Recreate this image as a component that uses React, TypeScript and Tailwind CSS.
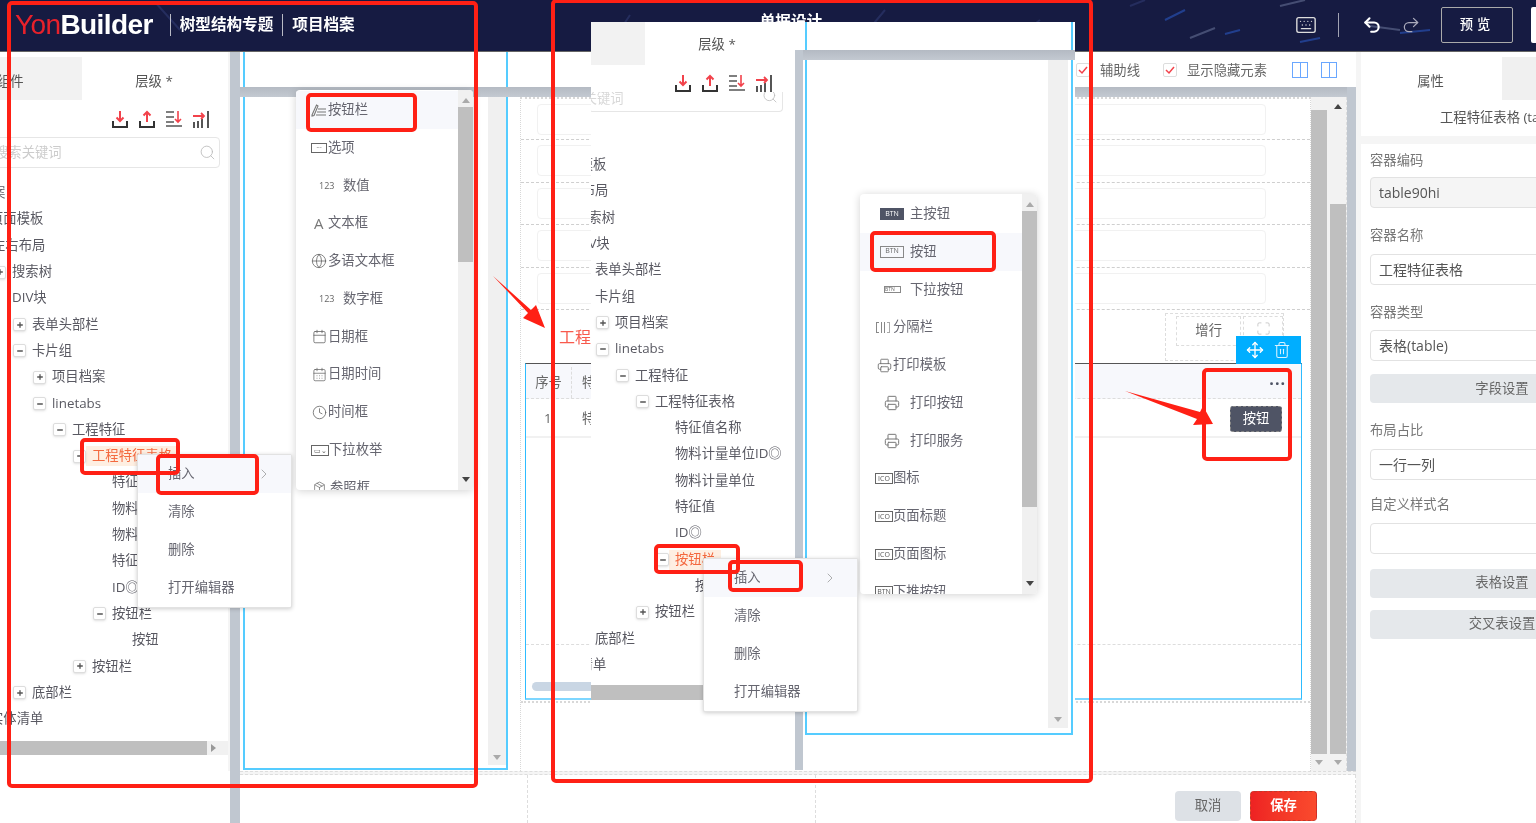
import { Calendar, CalendarDays, ChevronRight, Clock, Globe, Keyboard, Maximize, Minus, Move, Package, Plus, Printer, Redo2, Search, Trash2, Undo2 } from 'lucide-react';
import type { ReactNode } from 'react';

type Row = { text: string; level: number; exp?: 'plus' | 'minus'; active?: boolean };

const leftRows: Row[] = [
  { text: '项目档案', level: -2 },
  { text: '页面模板', level: -0.1 },
  { text: '左右布局', level: 0 },
  { text: '搜索树', level: 1, exp: 'plus' },
  { text: 'DIV块', level: 1 },
  { text: '表单头部栏', level: 2, exp: 'plus' },
  { text: '卡片组', level: 2, exp: 'minus' },
  { text: '项目档案', level: 3, exp: 'plus' },
  { text: 'linetabs', level: 3, exp: 'minus' },
  { text: '工程特征', level: 4, exp: 'minus' },
  { text: '工程特征表格', level: 5, exp: 'minus', active: true },
  { text: '特征值名称', level: 6 },
  { text: '物料计量单位ID◎', level: 6 },
  { text: '物料计量单位', level: 6 },
  { text: '特征值', level: 6 },
  { text: 'ID◎', level: 6 },
  { text: '按钮栏', level: 6, exp: 'minus' },
  { text: '按钮', level: 7 },
  { text: '按钮栏', level: 5, exp: 'plus' },
  { text: '底部栏', level: 2, exp: 'plus' },
  { text: '实体清单', level: -0.1 },
];

const rightRows: Row[] = [
  { text: '页面模板', level: -0.1 },
  { text: '左右布局', level: 0 },
  { text: '搜索树', level: 1 },
  { text: 'DIV块', level: 1 },
  { text: '表单头部栏', level: 2 },
  { text: '卡片组', level: 2 },
  { text: '项目档案', level: 3, exp: 'plus' },
  { text: 'linetabs', level: 3, exp: 'minus' },
  { text: '工程特征', level: 4, exp: 'minus' },
  { text: '工程特征表格', level: 5, exp: 'minus' },
  { text: '特征值名称', level: 6 },
  { text: '物料计量单位ID◎', level: 6 },
  { text: '物料计量单位', level: 6 },
  { text: '特征值', level: 6 },
  { text: 'ID◎', level: 6 },
  { text: '按钮栏', level: 6, exp: 'minus', active: true },
  { text: '按钮', level: 7 },
  { text: '按钮栏', level: 5, exp: 'plus' },
  { text: '底部栏', level: 2 },
  { text: '实体清单', level: -0.1 },
];

function Tree({ rows, start }: { rows: Row[]; start: number }) {
  return (
    <div className="whitespace-nowrap text-[13.33px] text-[#595962]">
      {rows.map((r, i) => (
        <div key={i} className="relative flex h-[26.3px] items-center" style={{ marginLeft: start + r.level * 20 }}>
          {r.exp && (
            <span className="absolute flex h-[13px] w-[13px] -translate-x-[19px] items-center justify-center rounded-[2px] border border-[#ddd] bg-white shadow-sm">
              {r.exp === 'plus' ? <Plus size={8} strokeWidth={4} color="#555" /> : <Minus size={8} strokeWidth={4} color="#555" />}
            </span>
          )}
          {r.active ? (
            <span className="-ml-[6px] bg-[#feefe2] px-[6px] text-[#f4693f]">{r.text}</span>
          ) : (
            <span>{r.text}</span>
          )}
        </div>
      ))}
    </div>
  );
}

function ToolIcons() {
  return (
    <div className="flex justify-end gap-[9px]">
      <svg width="18" height="18" viewBox="0 0 18 18" fill="none" strokeWidth="2">
        <path d="M2 11v6h14v-6" stroke="#333" />
        <path d="M9 1v10M5.5 7.5 9 11l3.5-3.5" stroke="#f2424b" />
      </svg>
      <svg width="18" height="18" viewBox="0 0 18 18" fill="none" strokeWidth="2">
        <path d="M2 11v6h14v-6" stroke="#333" />
        <path d="M9 12V2M5.5 5.5 9 2l3.5 3.5" stroke="#f2424b" />
      </svg>
      <svg width="18" height="18" viewBox="0 0 18 18" fill="none" strokeWidth="1.6">
        <path d="M1 2h8M1 7h8M1 12h8M1 16h16" stroke="#555" />
        <path d="M13 1v11M10 9l3 3 3-3" stroke="#f2424b" />
      </svg>
      <svg width="18" height="18" viewBox="0 0 18 18" fill="none" strokeWidth="1.8">
        <path d="M2 12v6M6 11v7M10 9v9M16 1v17" stroke="#444" />
        <path d="M1 6h11M9 3l3 3-3 3" stroke="#f2424b" />
      </svg>
    </div>
  );
}

function Badge({ label, dark }: { label: string; dark?: boolean }) {
  return (
    <span
      className={
        dark
          ? 'flex h-[12px] w-[24px] items-center justify-center bg-[#4f5465] text-[7px] text-white'
          : 'flex h-[12px] w-[24px] items-center justify-center border border-[#888] text-[7px] text-[#666]'
      }
    >
      {label}
    </span>
  );
}

function SmallBox({ label }: { label: string }) {
  return <span className="flex h-[11px] w-[18px] items-center justify-center border border-[#666] text-[7px] leading-none text-[#555]">{label}</span>;
}

type Item = { text: string; icon: ReactNode; hover?: boolean };

const menuOne: Item[] = [
  {
    text: '按钮栏',
    hover: true,
    icon: (
      <span className="flex w-[17px]">
        <svg width="16" height="14" viewBox="0 0 16 14" fill="none" stroke="#777" strokeWidth="1.1">
          <path d="M1 12 5.5 2l1.5 1L3 12.5 1 13zM7 6h8M6 9h9M5 12h10" />
        </svg>
      </span>
    ),
  },
  { text: '选项', icon: <span className="flex w-[17px]"><span className="flex h-[10px] w-[16px] items-center justify-center border border-[#666] text-[7px] leading-none text-[#555]">···</span></span> },
  { text: '数值', icon: <span className="flex w-[32px] pl-[8px] text-[9px] text-[#666]">123</span> },
  { text: '文本框', icon: <span className="flex w-[17px] pl-[3px] text-[15px] leading-none text-[#777]">A</span> },
  { text: '多语文本框', icon: <span className="flex w-[17px]"><Globe size={16} strokeWidth={1.2} color="#666" /></span> },
  { text: '数字框', icon: <span className="flex w-[32px] pl-[8px] text-[9px] text-[#666]">123</span> },
  { text: '日期框', icon: <span className="flex w-[17px] pl-[1px]"><Calendar size={15} strokeWidth={1.3} color="#666" /></span> },
  { text: '日期时间', icon: <span className="flex w-[17px] pl-[1px]"><CalendarDays size={15} strokeWidth={1.2} color="#666" /></span> },
  { text: '时间框', icon: <span className="flex w-[17px] pl-[1px]"><Clock size={15} strokeWidth={1.3} color="#666" /></span> },
  { text: '下拉枚举', icon: <span className="flex w-[18px]"><SmallBox label="▭⌄" /></span> },
  { text: '参照框', icon: <span className="flex w-[19px] pl-[2px]"><Package size={13} strokeWidth={1.3} color="#666" /></span> },
];

const menuTwo: Item[] = [
  { text: '主按钮', icon: <span className="flex w-[35px] pl-[5px]"><Badge label="BTN" dark /></span> },
  { text: '按钮', hover: true, icon: <span className="flex w-[35px] pl-[5px]"><Badge label="BTN" /></span> },
  { text: '下拉按钮', icon: <span className="flex w-[35px] pl-[9px]"><span className="h-[7px] w-[17px] border border-[#888] text-[5px] leading-none text-[#666]">BTN</span></span> },
  { text: '分隔栏', icon: <span className="flex w-[18px] gap-[2px] pl-[1px]"><span className="h-[11px] w-[3px] border-y border-l border-[#888]" /><span className="h-[11px] w-[1px] bg-[#888]" /><span className="h-[11px] w-[1px] bg-[#888]" /><span className="h-[11px] w-[3px] border-y border-r border-[#aaa]" /></span> },
  { text: '打印模板', icon: <span className="flex w-[18px] pl-[2px]"><Printer size={15} strokeWidth={1.3} color="#666" /></span> },
  { text: '打印按钮', icon: <span className="flex w-[35px] pl-[9px]"><Printer size={16} strokeWidth={1.5} color="#777" /></span> },
  { text: '打印服务', icon: <span className="flex w-[35px] pl-[9px]"><Printer size={16} strokeWidth={1.5} color="#777" /></span> },
  { text: '图标', icon: <span className="flex w-[18px]"><SmallBox label="ICO" /></span> },
  { text: '页面标题', icon: <span className="flex w-[18px]"><SmallBox label="ICO" /></span> },
  { text: '页面图标', icon: <span className="flex w-[18px]"><SmallBox label="ICO" /></span> },
  { text: '下推按钮', icon: <span className="flex w-[18px]"><SmallBox label="BTN" /></span> },
];

function ArrowUp() {
  return <span className="h-0 w-0 border-x-[4px] border-b-[5px] border-x-transparent border-b-[#444]" />;
}
function ArrowDown({ dark }: { dark?: boolean }) {
  return dark ? (
    <span className="h-0 w-0 border-x-[4px] border-t-[5px] border-x-transparent border-t-[#444]" />
  ) : (
    <span className="h-0 w-0 border-x-[4px] border-t-[5px] border-x-transparent border-t-[#aaa]" />
  );
}

function MenuPanel({ items, className, thumb }: { items: Item[]; className: string; thumb: string }) {
  return (
    <div className={'absolute flex h-[400px] w-[177px] overflow-hidden rounded-[4px] bg-white shadow-[0_1px_8px_rgba(0,0,0,0.18)] ' + className}>
      <div className="h-full flex-1 overflow-hidden pt-[1px]">
        {items.map((it) => (
          <div key={it.text} className={it.hover ? 'flex h-[37.8px] items-center bg-[#f7f8fc] pl-[15px] text-[13.33px] text-[#666670]' : 'flex h-[37.8px] items-center pl-[15px] text-[13.33px] text-[#666670]'}>
            {it.icon}
            <span>{it.text}</span>
          </div>
        ))}
      </div>
      <div className="flex w-[15px] flex-col items-center bg-[#f0f0f0] py-[8px]">
        <span className="h-0 w-0 border-x-[4px] border-b-[5px] border-x-transparent border-b-[#aaa]" />
        <div className={'mt-[4px] w-full bg-[#bfbfbf] ' + thumb} />
        <div className="flex-1" />
        <ArrowDown dark />
      </div>
    </div>
  );
}

function ContextMenu({ className }: { className: string }) {
  return (
    <div className={'absolute w-[155px] rounded-[2px] border border-[#e2e2e2] bg-white text-[13.33px] text-[#666670] shadow-[0_1px_4px_rgba(0,0,0,0.2)] ' + className}>
      <div className="flex h-[38px] items-center justify-between bg-[#f7f8fc] pr-[19px] pl-[30px]">
        <span>插入</span>
        <ChevronRight size={16} strokeWidth={1} color="#888" />
      </div>
      <div className="flex h-[38px] items-center pl-[30px]">清除</div>
      <div className="flex h-[38px] items-center pl-[30px]">删除</div>
      <div className="flex h-[38px] items-center pl-[30px]">打开编辑器</div>
    </div>
  );
}

function LeftPanel() {
  return (
    <aside className="flex h-full w-[228px] flex-col overflow-hidden bg-white pt-[5px]">
      <div className="flex h-[43px] text-[13.33px] text-[#555]">
        <div className="flex w-[82px] items-center bg-[#f2f2f2] pt-[6px]"><span className="-ml-[3px]">组件</span></div>
        <div className="flex flex-1 items-center justify-center pt-[6px] pr-[2px]">层级 *</div>
      </div>
      <div className="mt-[10px] pr-[18px]"><ToolIcons /></div>
      <div className="mt-[9px] mr-[8px] -ml-[14px] flex h-[31px] items-center justify-between rounded-[4px] border border-[#e6e6e6] pr-[3px] pl-[8px] text-[13.33px] text-[#ccc]">
        <span>搜索关键词</span>
        <Search size={17} strokeWidth={1.2} color="#bbb" />
      </div>
      <div className="mt-[12px] flex-1 overflow-hidden"><Tree rows={leftRows} start={-8} /></div>
      <div className="mb-[16px] flex h-[14px] items-center bg-[#f1f1f1]">
        <div className="h-full w-[207px] bg-[#bfbfbf]" />
        <span className="ml-[4px] h-0 w-0 border-y-[4px] border-l-[5px] border-y-transparent border-l-[#999]" />
      </div>
    </aside>
  );
}

function Checkbox() {
  return (
    <span className="flex h-[14px] w-[14px] items-center justify-center rounded-[2px] border border-[#ddd] bg-white">
      <svg width="10" height="10" viewBox="0 0 10 10" fill="none"><path d="M1 5l3 3 5-6" stroke="#f2424b" strokeWidth="1.5" /></svg>
    </span>
  );
}

function FormRow({ h }: { h: string }) {
  return (
    <div className={'flex items-center border-b border-dashed border-[#cfcfcf] pr-[44px] pl-[16px] ' + h}>
      <div className="h-[31px] flex-1 rounded-[4px] border border-[#f1f1f1]" />
    </div>
  );
}

function Canvas() {
  return (
    <div className="flex min-h-0 flex-1 flex-col">
      <div className="flex h-[35px] items-center gap-[10px] pr-[10px] text-[13.33px] text-[#666]">
        <div className="mr-auto ml-[3px] h-full w-[265px] border-x-2 border-[#55ccff]" />
        <span className="mt-[2px] flex items-center gap-[10px]">
          <Checkbox />
          <span className="mr-[13px]">辅助线</span>
          <Checkbox />
          <span className="mr-[15px]">显示隐藏元素</span>
        </span>
        <span className="flex h-[16px] w-[16px] justify-center border border-[#6aa7ff]"><span className="w-px bg-[#6aa7ff]" /></span>
        <span className="ml-[3px] flex h-[16px] w-[16px] justify-center border border-[#6aa7ff]"><span className="w-px bg-[#6aa7ff]" /></span>
      </div>
      <div className="h-[10px] bg-gradient-to-b from-[#b4bac3] to-[#c3c9d1]" />
      <div className="flex h-[674px]">
        <div className="w-[280px] shrink-0 pl-[3px]">
          <div className="flex h-[673px] w-[265px] justify-end border-x-2 border-b-2 border-[#55ccff] pb-[3px]">
            <div className="flex w-[18px] flex-col items-center justify-end bg-[#f0f0f0] pb-[5px]"><ArrowDown /></div>
          </div>
        </div>
        <div className="flex min-w-0 flex-1 flex-col border-x border-t-2 border-dotted border-[#d8d8d8]">
          <FormRow h="h-[41px]" />
          <FormRow h="h-[42.5px]" />
          <FormRow h="h-[42.5px]" />
          <FormRow h="h-[42.5px]" />
          <FormRow h="h-[42.5px]" />
          <div className="flex h-[53px] items-center justify-between pr-[26px] pl-[38px]">
            <span className="text-[16px] text-[#f85a4d]">工程特征</span>
            <div className="flex h-[48px] w-[119px] gap-[2px] border border-dashed border-[#ddd] pt-[2px] pl-[10px]">
              <div className="flex h-[30px] w-[66px] items-center justify-center border border-dashed border-[#ddd] text-[13.33px] text-[#666]">增行</div>
              <div className="flex h-[30px] w-[40px] items-start justify-center border border-dashed border-[#ddd] pt-[4px]"><Maximize size={15} strokeWidth={1.2} color="#bbb" /></div>
            </div>
          </div>
          <div className="relative ml-[4px] h-[337px] w-[777px] border border-b-2 border-[#2dbcff] border-t-[#555] border-b-[#7dd6ff]">
            <div className="absolute -top-[28px] right-0 flex h-[28px] w-[65px] items-center justify-center gap-[9px] bg-[#00aeff]">
              <Move size={18} strokeWidth={1.8} color="#fff" />
              <Trash2 size={18} strokeWidth={1.4} color="#d9f2ff" />
            </div>
            <div className="flex h-[35px] items-center justify-between border-b border-dashed border-[#ddd] bg-[#f7f8fc] pt-[3px] text-[13.33px] text-[#666]">
              <span className="flex h-full w-[46px] items-center justify-center border-r border-dashed border-[#ddd]">序号</span>
              <span className="mr-auto ml-[10px]">特征值名称</span>
              <span className="pr-[15px] text-[16px] leading-none font-bold tracking-[1px] text-[#4f5465]">···</span>
            </div>
            <div className="flex h-[39px] items-center justify-between border-b-2 border-[#f1f1f1] pt-[3px] text-[13.33px] text-[#666]">
              <span className="w-[46px] pl-[18px]">1</span>
              <span className="mr-auto ml-[10px]">特征值</span>
              <span className="mr-[19px] flex h-[26px] w-[52px] items-center justify-center rounded-[3px] border border-dashed border-[#888] bg-[#4f5465] text-white">按钮</span>
            </div>
            <div className="mt-[206px] border-t border-dashed border-[#ddd]" />
            <div className="mt-[37px] ml-[6px] h-[9px] w-[110px] rounded-full bg-[#c9d6e4]" />
          </div>
          <div className="mt-[1px] h-[3px] border-t-2 border-dotted border-[#d8d8d8]" />
        </div>
        <div className="flex h-full w-[36px] shrink-0 justify-between border-r border-dashed border-[#ddd] bg-[#f2f2f2]">
          <div className="flex w-[16px] flex-col items-center pt-[13px]">
            <div className="w-full flex-1 bg-[#bfbfbf]" />
            <div className="flex h-[17px] items-center"><ArrowDown /></div>
          </div>
          <div className="flex w-[16px] flex-col items-center pt-[7px]">
            <ArrowUp />
            <div className="mt-[95px] w-full flex-1 bg-[#bfbfbf]" />
            <div className="flex h-[17px] items-center"><ArrowDown /></div>
          </div>
        </div>
      </div>
    </div>
  );
}

function Field({ label, first, children }: { label: string; first?: boolean; children: ReactNode }) {
  return (
    <div>
      <div className={(first ? 'h-[33px] ' : 'h-[35px] ') + 'flex items-center text-[13.33px] text-[#777]'}>{label}</div>
      {children}
    </div>
  );
}

function Input({ text, muted }: { text?: string; muted?: boolean }) {
  return (
    <div className={(muted ? 'bg-[#f5f5f5] ' : 'bg-white ') + 'flex h-[31px] w-[300px] items-center rounded-[4px] border border-[#e2e2e2] pl-[8px] text-[14px] text-[#555]'}>{text}</div>
  );
}

function GrayButton({ text }: { text: string }) {
  return <div className="flex h-[29px] w-[264px] items-center justify-center rounded-[4px] bg-[#e5e8eb] text-[13.33px] text-[#666]">{text}</div>;
}

function RightPanel() {
  return (
    <aside className="flex h-[771px] w-[180px] shrink-0 flex-col overflow-hidden border-l-[5px] border-[#f5f5f5] bg-white pt-[5px]">
      <div className="flex h-[43px] shrink-0 text-[13.33px] text-[#555]">
        <div className="flex w-[141px] items-center justify-center pt-[6px] pr-[2px]">属性</div>
        <div className="flex-1 bg-[#f0f0f0]" />
      </div>
      <div className="flex h-[36px] shrink-0 items-center pl-[79px] text-[13.33px] whitespace-nowrap text-[#555]">工程特征表格 (table)</div>
      <div className="h-[8px] shrink-0 bg-[#f5f5f5]" />
      <div className="w-[300px] px-[9px]">
        <Field label="容器编码" first><Input text="table90hi" muted /></Field>
        <div className="mt-[10.5px]" />
        <Field label="容器名称"><Input text="工程特征表格" /></Field>
        <div className="mt-[10.5px]" />
        <Field label="容器类型"><Input text="表格(table)" /></Field>
        <div className="mt-[13px]"><GrayButton text="字段设置" /></div>
        <div className="mt-[10.5px]" />
        <Field label="布局占比"><Input text="一行一列" /></Field>
        <div className="mt-[8px]" />
        <Field label="自定义样式名"><Input /></Field>
        <div className="mt-[15px]"><GrayButton text="表格设置" /></div>
        <div className="mt-[12px]"><GrayButton text="交叉表设置" /></div>
      </div>
    </aside>
  );
}

function HeaderBar() {
  return (
    <header className="relative flex h-[52px] shrink-0 items-center overflow-hidden border-b border-[#666] bg-[#161b42] pr-[23px] pb-[2px] pl-[15px] text-white">
      <svg className="absolute inset-0" width="1536" height="52" fill="none">
        <path d="M155 2 180 30M1000 50 1040 20M860 40 885 10M610 45 630 15M1130 6 1145 0" stroke="#33407a" strokeWidth="2" opacity="0.5" />
        <path d="M1190 38 1215 28M1280 6 1305 0M1370 26 1400 30" stroke="#7f8bb0" strokeWidth="2" opacity="0.45" />
        <path d="M1165 20 1185 10M1225 34 1240 30M1300 42 1320 38M1400 33 1430 30" stroke="#2a56c0" strokeWidth="2" opacity="0.6" />
      </svg>
      <div className="relative flex items-center font-['Liberation_Sans',sans-serif] text-[28px] leading-none tracking-[-0.6px]">
        <span className="text-[#e8212b]">Yon</span>
        <span className="font-bold text-white">Builder</span>
      </div>
      <span className="relative mr-[9px] ml-[17px] h-[22px] w-px bg-white/70" />
      <span className="relative text-[15.6px] font-bold">树型结构专题</span>
      <span className="relative mx-[9px] h-[22px] w-px bg-white/70" />
      <span className="relative text-[15.6px] font-bold">项目档案</span>
      <span className="relative ml-[405px] -translate-y-[3px] text-[15.6px] font-bold">单据设计</span>
      <div className="relative ml-auto flex items-center">
        <Keyboard size={22} strokeWidth={1.5} color="#ddd" />
        <span className="mr-[23px] ml-[21px] h-[24px] w-px bg-white/60" />
        <Undo2 size={20} strokeWidth={2.5} color="#fff" />
        <Redo2 size={20} strokeWidth={1.5} color="#aab" className="ml-[19px]" />
        <div className="ml-[20px] flex h-[36px] w-[72px] items-center justify-center rounded-[2px] border border-[#aaa] text-[13.33px] font-medium tracking-[4px]">预览</div>
        <div className="mr-[-23px] ml-[18px] h-[36px] w-[5px] rounded-l-[2px] bg-white" />
      </div>
    </header>
  );
}

function Footer() {
  return (
    <div className="flex h-[52px] shrink-0">
      <div className="w-[240px] shrink-0 pl-[230px]"><div className="h-full w-[10px] bg-[#c0c7d0]" /></div>
      <div className="flex flex-1 flex-col pr-[180px]">
        <div className="h-[4px] border-y border-dashed border-[#ddd] bg-[#f5f5f5]" />
        <div className="ml-[287px] flex flex-1 border-x border-dashed border-[#ddd]">
          <div className="h-full w-[288px] border-r border-dashed border-[#ddd]" />
          <div className="ml-auto flex items-center gap-[9px] pt-[14px] pr-[38px]">
            <span className="flex h-[30px] w-[66px] items-center justify-center rounded-[4px] bg-[#dde1e6] text-[13.33px] text-[#666]">取消</span>
            <span className="flex h-[30px] w-[67px] items-center justify-center rounded-[4px] border border-dashed border-[#c0392b] bg-gradient-to-r from-[#ee2223] to-[#fa4a2d] text-[13.33px] font-bold text-white">保存</span>
          </div>
        </div>
      </div>
    </div>
  );
}

// second screenshot pasted over the first one
function PastedShot() {
  return (
    <div className="absolute top-[22px] left-[591px] flex h-[748px] w-[484px] bg-white">
      <div className="flex w-[202px] shrink-0 flex-col overflow-hidden">
        <div className="flex h-[43px] shrink-0 text-[13.33px] text-[#555]">
          <div className="w-[54px] bg-[#f2f2f2]" />
          <div className="flex flex-1 items-center justify-center pt-[3px] pr-[4px]">层级 *</div>
        </div>
        <div className="mt-[9px] pr-[20px]"><ToolIcons /></div>
        <div className="mr-[10px] -ml-[2px] flex h-[20px] shrink-0 items-start justify-between overflow-hidden rounded-b-[4px] border-x border-b border-[#e6e6e6] pr-[4px] text-[13.33px] text-[#d8d8d8]">
          <span className="-mt-[3px] -ml-[33px]">搜索关键词</span>
          <span className="-mt-[4px]"><Search size={16} strokeWidth={1.2} color="#bbb" /></span>
        </div>
        <div className="mt-[40px] h-[533px] shrink-0 overflow-hidden"><Tree rows={rightRows} start={-36} /></div>
        <div className="h-[15px] shrink-0 bg-[#bfbfbf]" />
      </div>
      <div className="mt-[28px] ml-[2px] w-[8px] shrink-0 bg-[#c0c7d0]" />
      <div className="flex flex-1 flex-col">
        <div className="h-[28px] shrink-0 pl-[2px]"><div className="h-full w-[268px] border-x-2 border-[#55ccff]" /></div>
        <div className="h-[10px] shrink-0 bg-gradient-to-b from-[#b4bac3] to-[#c3c9d1]" />
        <div className="h-[675px] pl-[2px]">
          <div className="flex h-full w-[268px] justify-end border-x-2 border-b-2 border-[#55ccff] pr-[3px] pb-[5px]">
            <div className="flex w-[20px] flex-col items-center justify-end bg-[#f0f0f0] pb-[6px]"><ArrowDown /></div>
          </div>
        </div>
      </div>
    </div>
  );
}

function Mark({ className }: { className: string }) {
  return <div className={'pointer-events-none absolute rounded-[5px] border-[4px] border-[#ff2015] ' + className} />;
}

// the red boxes and arrows somebody drew on the screenshots
function Annotations() {
  return (
    <>
      <Mark className="top-[1px] left-[7px] h-[787px] w-[471px]" />
      <Mark className="-top-[1px] left-[551px] h-[784px] w-[542px]" />
      <Mark className="top-[93px] left-[306px] h-[39px] w-[111px]" />
      <Mark className="top-[438px] left-[80px] h-[37px] w-[100px]" />
      <Mark className="top-[454px] left-[156px] h-[41px] w-[103px]" />
      <Mark className="top-[231px] left-[870px] h-[41px] w-[126px]" />
      <Mark className="top-[544px] left-[654px] h-[30px] w-[86px]" />
      <Mark className="top-[560px] left-[728px] h-[32px] w-[75px]" />
      <Mark className="top-[368px] left-[1202px] h-[93px] w-[90px]" />
      <svg className="pointer-events-none absolute inset-0" width="1536" height="823" fill="#ff2015">
        <polygon points="493,276 531,310 536,305 545,328 523,318 528,313" />
        <polygon points="1125,391 1200,412 1203,406 1213,424 1193,425 1197,419" />
      </svg>
    </>
  );
}

export default function App() {
  return (
    <div className="relative flex h-[823px] w-full flex-col overflow-hidden bg-white font-['Open_Sans','Noto_Sans_CJK_SC',sans-serif] blur-[0.3px]">
      <HeaderBar />
      <main className="flex h-[719px] shrink-0">
        <LeftPanel />
        <div className="w-[2px] shrink-0 bg-[#f5f5f5]" />
        <div className="w-[10px] shrink-0 bg-[#c0c7d0]" />
        <Canvas />
        <div className="mt-[35px] w-[9px] shrink-0 bg-[#c0c7d0]" />
        <RightPanel />
      </main>
      <Footer />
      <MenuPanel items={menuOne} className="top-[90px] left-[296px]" thumb="h-[155px]" />
      <ContextMenu className="top-[454px] left-[137px]" />
      <PastedShot />
      <MenuPanel items={menuTwo} className="top-[194px] left-[860px]" thumb="h-[296px]" />
      <ContextMenu className="top-[558px] left-[703px]" />
      <Annotations />
    </div>
  );
}
